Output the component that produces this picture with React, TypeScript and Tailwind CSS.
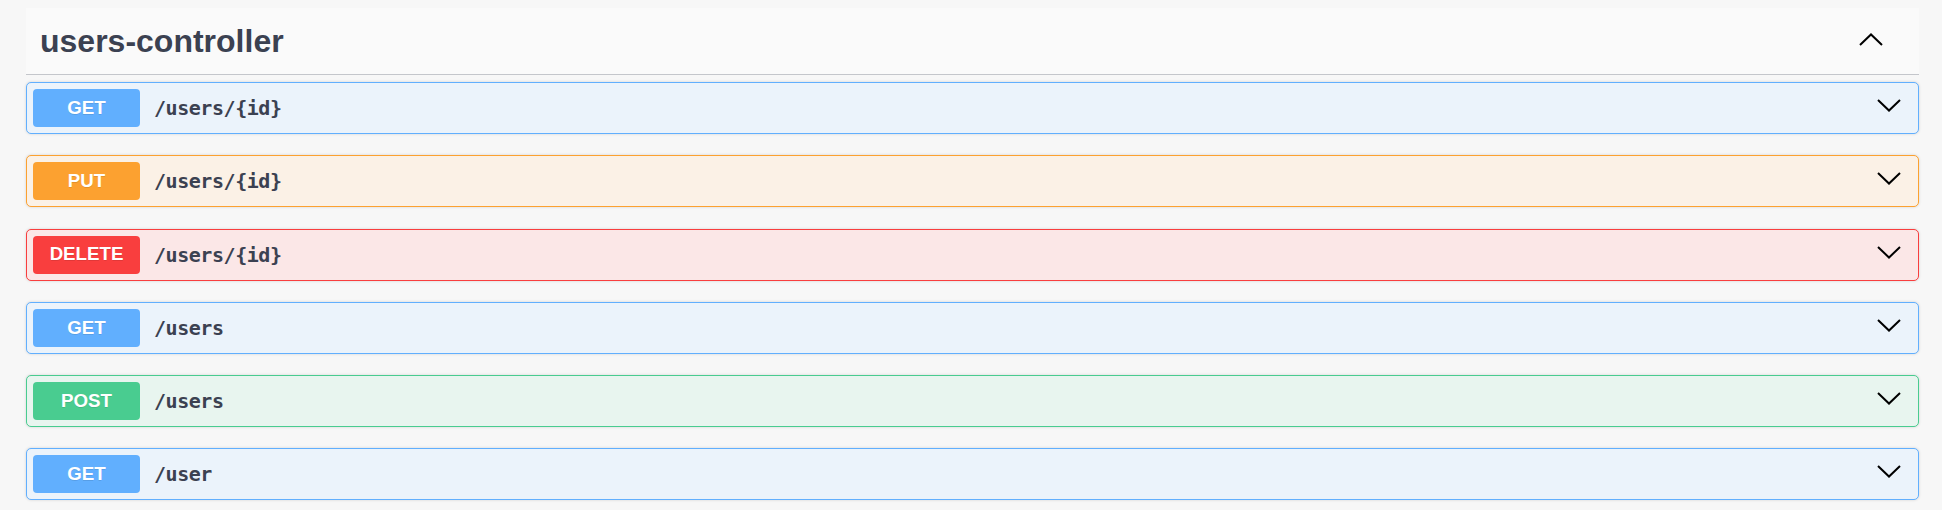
import React from "react";

type Op = { method: string; path: string; badge: string; border: string; bg: string };

const ops: Op[] = [
  { method: "GET", path: "/users/{id}", badge: "bg-[#61affe]", border: "border-[#61affe]", bg: "bg-[#ebf3fb]" },
  { method: "PUT", path: "/users/{id}", badge: "bg-[#fca130]", border: "border-[#fca130]", bg: "bg-[#fbf1e6]" },
  { method: "DELETE", path: "/users/{id}", badge: "bg-[#f93e3e]", border: "border-[#f93e3e]", bg: "bg-[#fbe7e7]" },
  { method: "GET", path: "/users", badge: "bg-[#61affe]", border: "border-[#61affe]", bg: "bg-[#ebf3fb]" },
  { method: "POST", path: "/users", badge: "bg-[#49cc90]", border: "border-[#49cc90]", bg: "bg-[#e8f5ef]" },
  { method: "GET", path: "/user", badge: "bg-[#61affe]", border: "border-[#61affe]", bg: "bg-[#ebf3fb]" },
];

function Chevron({ up }: { up?: boolean }) {
  return (
    <svg width="24" height="13" viewBox="0 0 24 13" fill="none" className="block">
      {up ? (
        <polyline points="1,12 12,1.5 23,12" stroke="#000" strokeWidth="2" strokeLinejoin="miter" />
      ) : (
        <polyline points="1,1 12,11.5 23,1" stroke="#000" strokeWidth="2" strokeLinejoin="miter" />
      )}
    </svg>
  );
}

export default function App() {
  return (
    <div className="h-[510px] w-full overflow-hidden bg-[#f7f7f7] pl-[26px] pr-[23px] pt-[8px]">
      <div className="flex h-[67px] items-center justify-between border-b border-[#c4c6cb] bg-[#fafafa] pl-[14px] pr-[36px]">
        <h3 className="text-[32px] font-bold leading-[37px] text-[#3b4151] [font-family:'Liberation_Sans',Arial,sans-serif]">
          users-controller
        </h3>
        <div className="mb-[4px]">
          <Chevron up />
        </div>
      </div>
      <div className="mt-[7px] flex flex-col gap-[21.25px]">
        {ops.map((op, i) => (
          <div
            key={i}
            className={`flex h-[52px] items-center rounded-[5px] border ${op.border} ${op.bg} pl-[6px] pr-[17px] shadow-[0_0_3px_rgba(0,0,0,0.15)]`}
          >
            <div
              className={`flex h-[38px] w-[107px] items-center justify-center rounded-[4px] ${op.badge} text-[18.7px] font-bold text-white [font-family:'Liberation_Sans',Arial,sans-serif] [text-shadow:0_1px_0_rgba(0,0,0,0.1)]`}
            >
              {op.method}
            </div>
            <div className="ml-[14px] flex-1 text-[20px] font-bold tracking-[-0.45px] text-[#3b4151] [font-family:'DejaVu_Sans_Mono',monospace]">
              {op.path}
            </div>
            <div className="mb-[5px]">
              <Chevron />
            </div>
          </div>
        ))}
      </div>
    </div>
  );
}
